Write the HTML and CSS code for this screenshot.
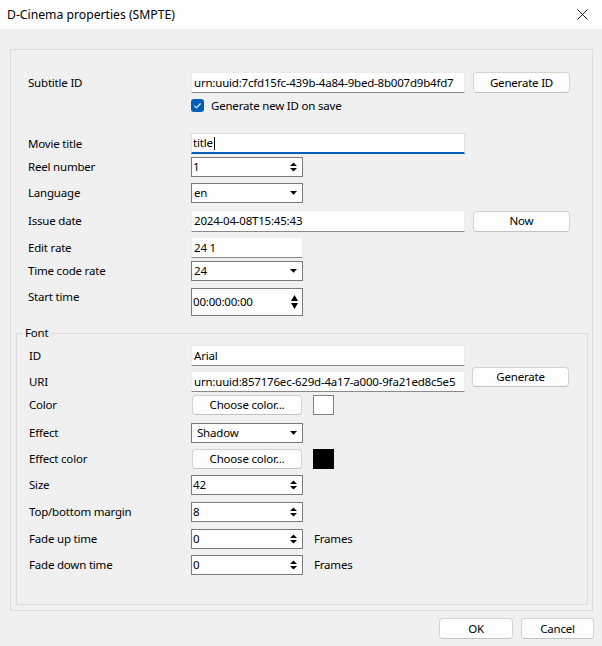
FILE: index.html
```html
<!DOCTYPE html>
<html>
<head>
<meta charset="utf-8">
<title>D-Cinema properties (SMPTE)</title>
<link rel="stylesheet" href="styles.css">
</head>
<body>
<div class="titlebar">
  <span class="title">D-Cinema properties (SMPTE)</span>
  <svg class="close" width="11" height="11" viewBox="0 0 11 11"><path d="M0.5 0.5L10.5 10.5M10.5 0.5L0.5 10.5" stroke="#1a1a1a" stroke-width="1"/></svg>
</div>
<div class="dialog">
  <div class="frame">
    <div class="upper">
      <div class="row first">
        <span class="lbl">Subtitle ID</span>
        <span class="edit wide">urn:uuid:7cfd15fc-439b-4a84-9bed-8b007d9b4fd7</span>
        <span class="btn side">Generate ID</span>
      </div>
      <div class="row checkrow gap6">
        <span class="lbl"></span>
        <span class="check"><svg width="13" height="13" viewBox="0 0 13 13"><path d="M3.4 6.8L5.5 8.8L9.6 4.5" fill="none" stroke="#fff" stroke-width="1.1"/></svg></span>
        <span class="checktext">Generate new ID on save</span>
      </div>
      <div class="row gap21">
        <span class="lbl">Movie title</span>
        <span class="edit wide focus">title<span class="caret"></span></span>
      </div>
      <div class="row gap3">
        <span class="lbl">Reel number</span>
        <span class="spin">1<svg class="arrows" width="7" height="10" viewBox="0 0 7 10"><path d="M0 4L3.5 0.5L7 4ZM0 6L3.5 9.5L7 6Z"/></svg></span>
      </div>
      <div class="row gap6">
        <span class="lbl">Language</span>
        <span class="spin combo">en<svg class="arrows" width="7" height="4" viewBox="0 0 7 4"><path d="M0 0L7 0L3.5 3.8Z"/></svg></span>
      </div>
      <div class="row gap7">
        <span class="lbl">Issue date</span>
        <span class="edit wide tall">2024-04-08T15:45:43</span>
        <span class="btn side">Now</span>
      </div>
      <div class="row gap5">
        <span class="lbl">Edit rate</span>
        <span class="edit short">24 1</span>
      </div>
      <div class="row gap3">
        <span class="lbl">Time code rate</span>
        <span class="spin combo">24<svg class="arrows" width="7" height="4" viewBox="0 0 7 4"><path d="M0 0L7 0L3.5 3.8Z"/></svg></span>
      </div>
      <div class="row gap7 top">
        <span class="lbl lbl-top">Start time</span>
        <span class="spin big">00:00:00:00<svg class="arrows" width="7" height="14" viewBox="0 0 7 14"><path d="M0 6L3.5 0L7 6ZM0 8L3.5 14L7 8Z"/></svg></span>
      </div>
    </div>
    <fieldset class="group">
      <legend>Font</legend>
      <div class="grows">
        <div class="row gap4">
          <span class="lbl">ID</span>
          <span class="edit wide">Arial</span>
        </div>
        <div class="row gap5 uri">
          <span class="lbl">URI</span>
          <span class="edit wide">urn:uuid:857176ec-629d-4a17-a000-9fa21ed8c5e5</span>
          <span class="btn side raised">Generate</span>
        </div>
        <div class="row gap3">
          <span class="lbl">Color</span>
          <span class="btn choose">Choose color...</span>
          <span class="swatch white"></span>
        </div>
        <div class="row gap8">
          <span class="lbl">Effect</span>
          <span class="spin combo roomy">Shadow<svg class="arrows" width="7" height="4" viewBox="0 0 7 4"><path d="M0 0L7 0L3.5 3.8Z"/></svg></span>
        </div>
        <div class="row gap6">
          <span class="lbl">Effect color</span>
          <span class="btn choose">Choose color...</span>
          <span class="swatch black"></span>
        </div>
        <div class="row gap6">
          <span class="lbl">Size</span>
          <span class="spin">42<svg class="arrows" width="7" height="10" viewBox="0 0 7 10"><path d="M0 4L3.5 0.5L7 4ZM0 6L3.5 9.5L7 6Z"/></svg></span>
        </div>
        <div class="row gap7">
          <span class="lbl">Top/bottom margin</span>
          <span class="spin">8<svg class="arrows" width="7" height="10" viewBox="0 0 7 10"><path d="M0 4L3.5 0.5L7 4ZM0 6L3.5 9.5L7 6Z"/></svg></span>
        </div>
        <div class="row gap7">
          <span class="lbl">Fade up time</span>
          <span class="spin">0<svg class="arrows" width="7" height="10" viewBox="0 0 7 10"><path d="M0 4L3.5 0.5L7 4ZM0 6L3.5 9.5L7 6Z"/></svg></span>
          <span class="unit">Frames</span>
        </div>
        <div class="row gap6">
          <span class="lbl">Fade down time</span>
          <span class="spin">0<svg class="arrows" width="7" height="10" viewBox="0 0 7 10"><path d="M0 4L3.5 0.5L7 4ZM0 6L3.5 9.5L7 6Z"/></svg></span>
          <span class="unit">Frames</span>
        </div>
      </div>
    </fieldset>
  </div>
  <div class="footer">
    <span class="btn ok">OK</span>
    <span class="btn cancel">Cancel</span>
  </div>
</div>
</body>
</html>
```
FILE: styles.css
```css
* { box-sizing: border-box; }
html, body { margin: 0; padding: 0; }
body {
  width: 602px;
  height: 646px;
  overflow: hidden;
  background: #f0f0f0;
  color: #000;
  font-family: "Noto Sans", "DejaVu Sans", sans-serif;
  font-size: 11.5px;
  letter-spacing: -0.2px;
  line-height: 16px;
}
.titlebar {
  height: 29px;
  background: #fff;
  display: flex;
  align-items: center;
  justify-content: space-between;
  padding: 0 14px 0 7px;
}
.title { font-size: 12.2px; letter-spacing: 0; }
.close { display: block; }
.dialog { padding: 20px 0 0 10px; }
.frame {
  width: 583px;
  height: 562px;
  border: 1px solid #dcdcdc;
  padding-top: 22px;
}
.upper { padding-left: 17px; }
.row { display: flex; align-items: center; }
.row.top { align-items: flex-start; }
.checkrow { height: 13px; }
.gap3 { margin-top: 3px; }
.gap4 { margin-top: 4px; }
.gap5 { margin-top: 5px; }
.gap6 { margin-top: 6px; }
.gap7 { margin-top: 7px; }
.gap8 { margin-top: 8px; }
.gap21 { margin-top: 21px; }
.lbl { width: 163px; flex: none; white-space: nowrap; }
.lbl-top { padding-top: 1px; }
.edit {
  height: 21px;
  background: #fff;
  border: 1px solid #ececec;
  border-bottom-color: #8a8a8a;
  padding: 0 2px;
  display: flex;
  align-items: center;
  white-space: nowrap;
  overflow: hidden;
}
.edit.wide { width: 274px; }
.edit.tall { height: 22px; }
.edit.short { width: 112px; }
.edit.focus {
  border-color: #d9e3ee;
  border-bottom: 2px solid #005fb8;
  padding-left: 1px;
}
.caret { display: inline-block; width: 1px; height: 13px; background: #000; margin-left: 1px; }
.spin {
  width: 112px;
  height: 20px;
  background: #fff;
  border: 1px solid #7a7a7a;
  padding: 0 5px 0 1px;
  display: flex;
  align-items: center;
  justify-content: space-between;
  white-space: nowrap;
}
.spin.combo { padding-left: 2px; }
.spin.combo.roomy { padding-left: 5px; }
.spin.big { height: 28px; padding-right: 4px; }
.arrows { display: block; flex: none; }
.btn {
  display: flex;
  align-items: center;
  justify-content: center;
  background: #fdfdfd;
  border: 1px solid #d3d3d3;
  border-bottom-color: #c2c2c2;
  border-radius: 4px;
  white-space: nowrap;
}
.btn.side { width: 97px; height: 21px; margin-left: 8px; }
.btn.raised { align-self: flex-start; margin-top: -4px; height: 20px; margin-left: 7px; }
.btn.choose { width: 110px; height: 20px; margin-left: 1px; }
.check {
  width: 13px;
  height: 13px;
  border-radius: 3px;
  background: #005fb8;
  display: block;
  flex: none;
}
.check svg { display: block; }
.checktext { margin-left: 7px; }
.swatch { width: 21px; height: 20px; margin-left: 11px; flex: none; }
.swatch.white { background: #fff; border: 1px solid #808080; }
.swatch.black { background: #000; border: 1px solid #000; }
.unit { margin-left: 11px; }
.group {
  margin: 9px 4px 0 5px;
  padding: 0 0 29px 0;
  border: 1px solid #dcdcdc;
  min-width: 0;
}
.group legend {
  margin-left: 6px;
  padding: 0 2px;
  line-height: 16px;
}
.grows { padding-left: 12px; }
.grows .lbl { width: 162px; }
.footer {
  display: flex;
  justify-content: flex-start;
  padding: 7px 0 0 429px;
  gap: 8px;
}
.btn.ok { width: 74px; height: 21px; }
.btn.cancel { width: 73px; height: 21px; }
```
